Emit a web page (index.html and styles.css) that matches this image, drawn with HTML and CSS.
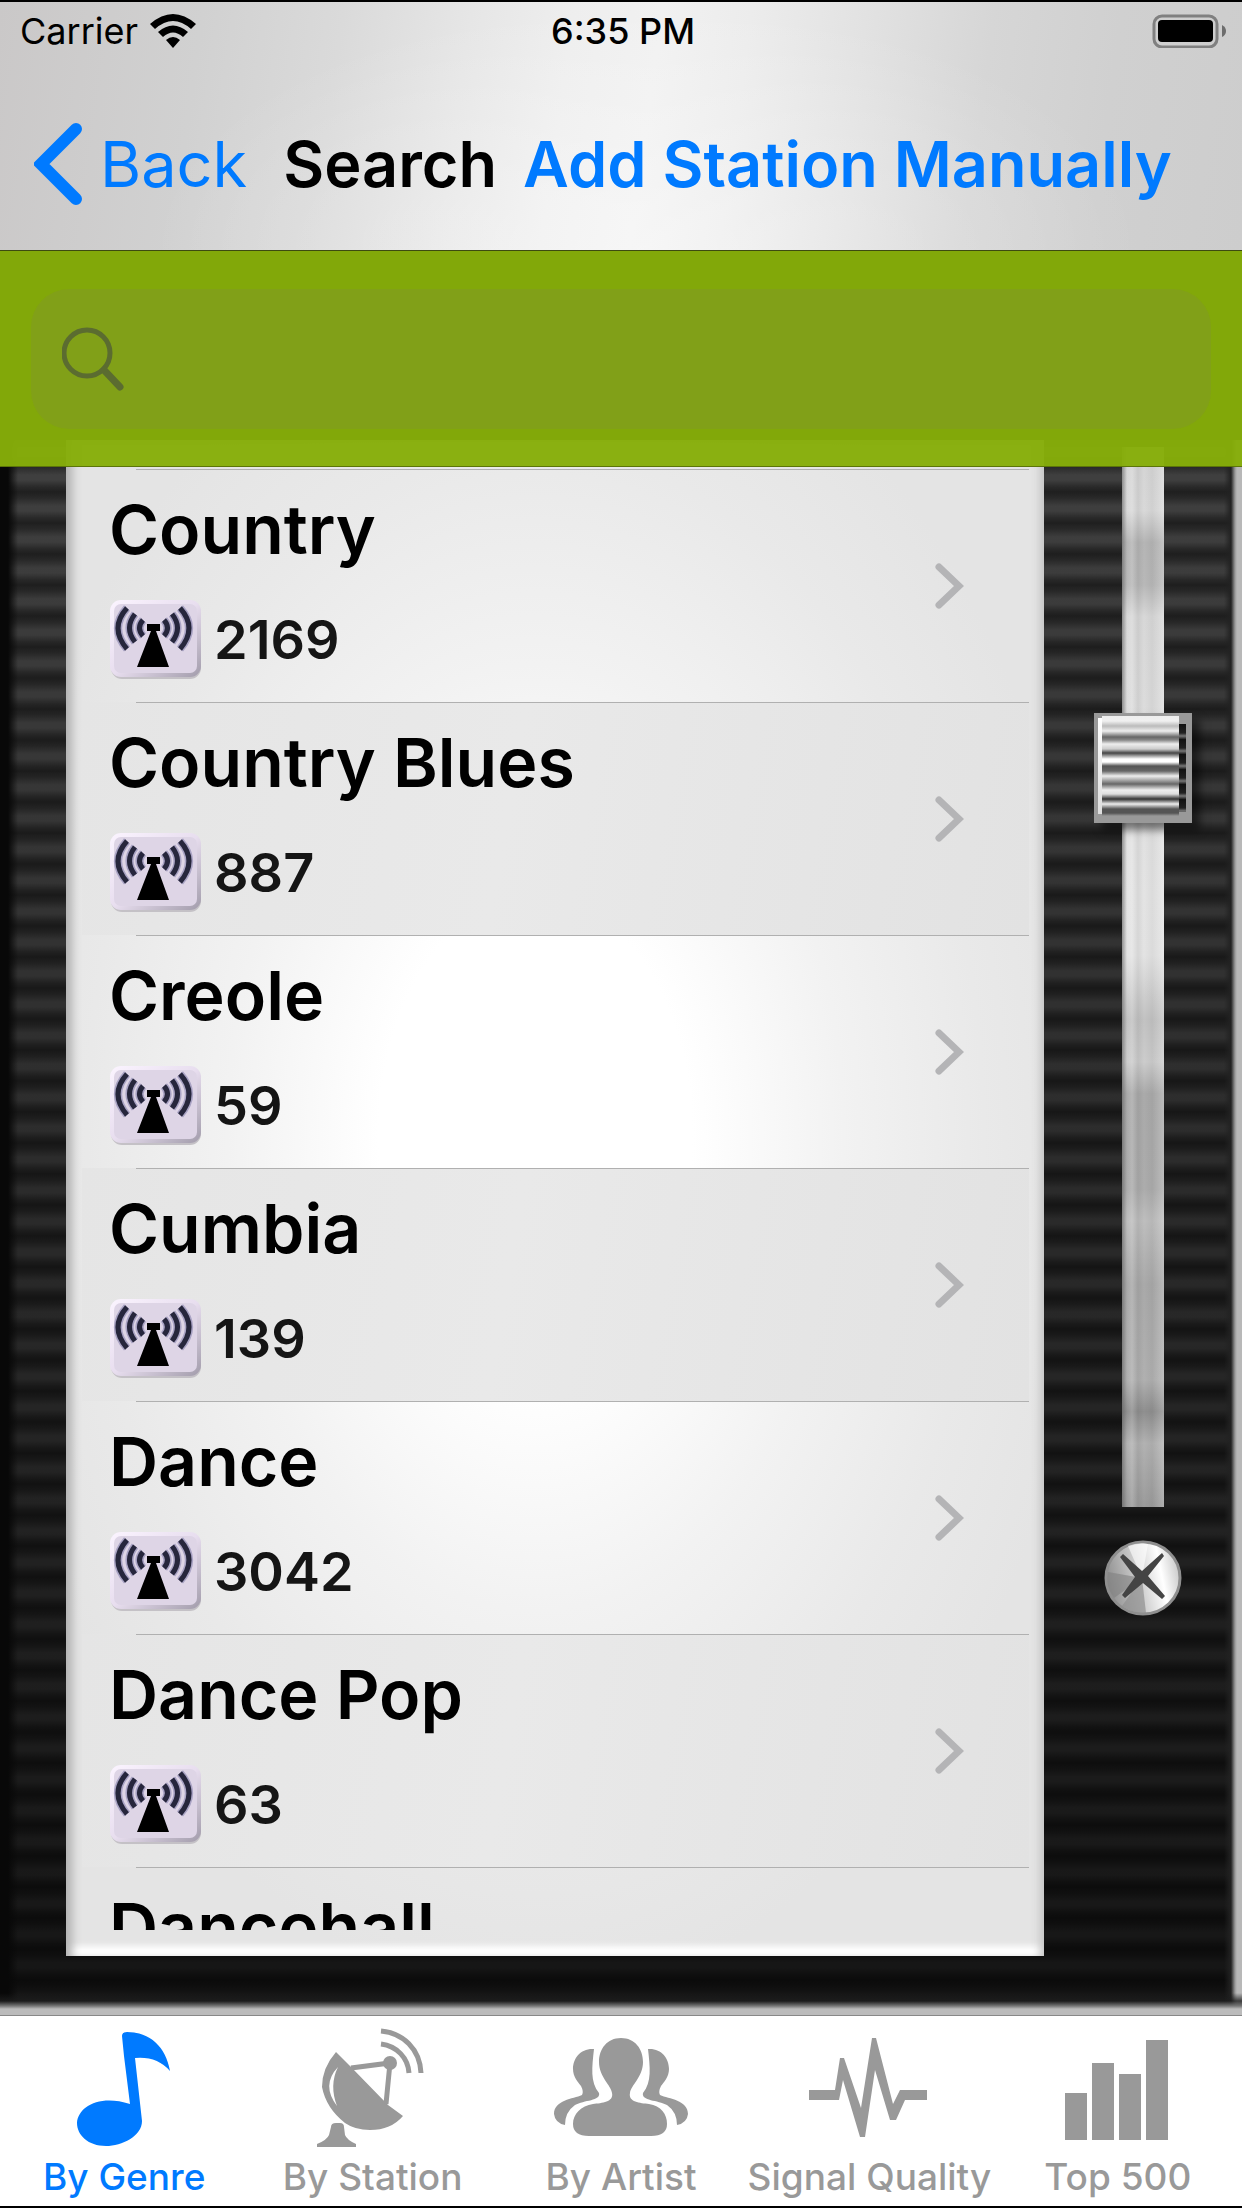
FILE: index.html
```html
<!DOCTYPE html>
<html lang="en">
<head>
    <meta charset="UTF-8">
    <meta name="viewport" content="width=device-width, initial-scale=1.0">
    <title>Search</title>
    <link rel="stylesheet" href="styles.css">
</head>
<body>
<!-- shared icons -->
<svg class="sprite" width="0" height="0" aria-hidden="true">
    <defs>
        <linearGradient id="badge-edge" x1="0" y1="0" x2="1" y2="1">
            <stop offset="0" stop-color="#fbf4ff"/>
            <stop offset="0.5" stop-color="#e8deef"/>
            <stop offset="1" stop-color="#a29cab"/>
        </linearGradient>
        <symbol id="antenna" viewBox="0 0 93 81">
            <rect x="2" y="4" width="90" height="76" rx="11" fill="#c4c1c6"/>
            <rect x="1" y="1" width="91" height="77" rx="11" fill="url(#badge-edge)"/>
            <rect x="5" y="5" width="83" height="69" rx="7" fill="#ded5e6"/>
            <g fill="none" stroke="#a9a3c4" stroke-width="8">
                <path d="M18 9Q0 29 18 50M26 15Q15 29 26 43M34 21Q27 29 34 37"/>
                <path d="M71 9Q89 29 71 50M63 15Q74 29 63 43M55 21Q62 29 55 37"/>
            </g>
            <g fill="none" stroke="#26263c" stroke-width="5">
                <path d="M18 9Q0 29 18 50M26 15Q15 29 26 43M34 21Q27 29 34 37"/>
                <path d="M71 9Q89 29 71 50M63 15Q74 29 63 43M55 21Q62 29 55 37"/>
            </g>
            <path d="M38 25h13v7h-4L60 68H28L42 32h-4z"/>
        </symbol>
        <symbol id="chevron" viewBox="0 0 30 48">
            <path d="M5 5L25 24L5 43" fill="none" stroke="#b4b4b6" stroke-width="7" stroke-linecap="round"/>
        </symbol>
    </defs>
</svg>

<header class="header">
    <div class="status-bar">
        <div class="carrier">
            <span>Carrier</span>
            <svg class="wifi" viewBox="0 0 46 34" aria-hidden="true">
                <path d="M0 10Q23-10 46 10L41 15Q23-1 5 15zM8 18Q23 5 38 18L33 23Q23 14 13 23zM16 26Q23 20 30 26L23 34z"/>
            </svg>
        </div>
        <span class="clock">6:35 PM</span>
        <svg class="battery" viewBox="0 0 74 34" aria-hidden="true">
            <rect x="2" y="2" width="63" height="31" rx="8" fill="none" stroke="#808080" stroke-width="3"/>
            <rect x="6" y="6" width="55" height="22" rx="4"/>
            <path d="M70 11Q74 13 74 17T70 23z" fill="#6d6d6d"/>
        </svg>
    </div>
    <nav class="nav-bar">
        <a class="back" href="#">
            <svg class="back-arrow" viewBox="0 0 50 82" aria-hidden="true">
                <path d="M42 6L7 41L42 76" fill="none" stroke="#007aff" stroke-width="12" stroke-linecap="round"/>
            </svg>
            Back
        </a>
        <h1 class="title">Search</h1>
        <a class="add-station" href="#">Add Station Manually</a>
    </nav>
</header>

<form class="search-bar">
    <label class="search-field">
        <svg class="search-icon" viewBox="0 0 62 64" aria-hidden="true">
            <circle cx="25" cy="26" r="23" fill="none" stroke="#5b6c30" stroke-width="5"/>
            <path d="M42 43L58 60" stroke="#5b6c30" stroke-width="7" stroke-linecap="round"/>
        </svg>
        <input class="search-input" type="search" aria-label="Search">
    </label>
</form>

<main class="radio">
    <section class="card">
        <ul class="genre-list">
            <li><a class="genre" href="#">
                <span class="genre-name">Country</span>
                <span class="genre-count"><svg class="badge"><use href="#antenna"/></svg>2169</span>
                <svg class="chevron"><use href="#chevron"/></svg>
            </a></li>
            <li><a class="genre" href="#">
                <span class="genre-name">Country Blues</span>
                <span class="genre-count"><svg class="badge"><use href="#antenna"/></svg>887</span>
                <svg class="chevron"><use href="#chevron"/></svg>
            </a></li>
            <li><a class="genre" href="#">
                <span class="genre-name">Creole</span>
                <span class="genre-count"><svg class="badge"><use href="#antenna"/></svg>59</span>
                <svg class="chevron"><use href="#chevron"/></svg>
            </a></li>
            <li><a class="genre" href="#">
                <span class="genre-name">Cumbia</span>
                <span class="genre-count"><svg class="badge"><use href="#antenna"/></svg>139</span>
                <svg class="chevron"><use href="#chevron"/></svg>
            </a></li>
            <li><a class="genre" href="#">
                <span class="genre-name">Dance</span>
                <span class="genre-count"><svg class="badge"><use href="#antenna"/></svg>3042</span>
                <svg class="chevron"><use href="#chevron"/></svg>
            </a></li>
            <li><a class="genre" href="#">
                <span class="genre-name">Dance Pop</span>
                <span class="genre-count"><svg class="badge"><use href="#antenna"/></svg>63</span>
                <svg class="chevron"><use href="#chevron"/></svg>
            </a></li>
            <li><a class="genre" href="#">
                <span class="genre-name">Dancehall</span>
            </a></li>
        </ul>
    </section>
    <aside class="tuner">
        <input class="slider" type="range" min="0" max="100" value="28" aria-label="Scroll position">
        <svg class="screw" viewBox="0 0 78 76" aria-hidden="true">
            <defs>
                <linearGradient id="screw-face" x1="0" y1="0.6" x2="1" y2="0.4">
                    <stop offset="0" stop-color="#8c8c8c"/>
                    <stop offset="0.45" stop-color="#cfcfcf"/>
                    <stop offset="0.75" stop-color="#fff"/>
                    <stop offset="1" stop-color="#c8c8c8"/>
                </linearGradient>
            </defs>
            <ellipse cx="39" cy="38" rx="37" ry="36" fill="url(#screw-face)" stroke="#8f8f8f" stroke-width="3"/>
            <path d="M38 38L4 32Q1 46 10 58z" fill="#808080" opacity="0.6"/>
            <path d="M38 38L18 66Q30 74 42 73z" fill="#909090" opacity="0.7"/>
            <path d="M38 38L24 6Q34 2 44 4z" fill="#fff" opacity="0.6"/>
            <path d="M19 14L38 31L58 13L60 16L44 36L61 56L58 59L39 43L21 58L18 55L31 37L16 17z" fill="#444"/>
        </svg>
    </aside>
</main>

<nav class="tab-bar">
    <a class="tab active" href="#">
        <svg class="tab-icon" viewBox="-8 0 136 126" aria-hidden="true">
            <path d="M58 12Q58 8 63 8C86 8 102 23 106 47Q93 32 71 34L78 97C78 112 58 122 42 122C24 122 13 111 13 99C14 83 35 70 66 80L60 32z"/>
        </svg>
        <span>By Genre</span>
    </a>
    <a class="tab" href="#">
        <svg class="tab-icon" viewBox="-8 0 136 126" aria-hidden="true">
            <path d="M23 28L39 44L75 81L90 92Q78 106 57 106Q42 106 32 99Q13 84 9 63Q9 44 23 28zM25 43Q8 61 24 82Q16 61 25 43z" fill-rule="evenodd"/>
            <path d="M38 44L77 39L73 80M68 7C90 9 107 25 108 49M68 20C84 22 95 34 96 49" fill="none" stroke="#999" stroke-width="5"/>
            <circle cx="77" cy="39" r="7"/>
            <path d="M18 103Q18 99 23 99H27Q31 99 31 103L32 111Q34 116 43 120V123H4V120Q14 116 16 111z"/>
        </svg>
        <span>By Station</span>
    </a>
    <a class="tab" href="#">
        <svg class="tab-icon" viewBox="-8 0 136 126" aria-hidden="true">
            <path id="person" d="M33 25C20 24 12 34 12 45C12 53 17 58 20 62Q23 68 21 71C12 75-7 76-7 90Q-6 99 4 101Q4 88 14 81C23 76 40 77 38 69C29 58 31 43 33 25z"/>
            <use href="#person" transform="matrix(-1 0 0 1 120 0)"/>
            <path d="M60 14C74 14 82 25 82 38C82 53 70 61 69 69C67 78 79 79 88 80C100 82 106 90 106 100Q106 112 90 112H28Q12 112 12 100C12 90 20 82 32 80C41 79 53 78 51 69C50 61 38 53 38 38C38 25 46 14 60 14z"/>
        </svg>
        <span>By Artist</span>
    </a>
    <a class="tab" href="#">
        <svg class="tab-icon" viewBox="-8 0 136 126" aria-hidden="true">
            <path d="M0 66H26L31 34H35L52 84L63 14H67L84 80L91 66H118V76H96L87 96H81L66 46L56 113H51L34 56L30 76H0z"/>
        </svg>
        <span>Signal Quality</span>
    </a>
    <a class="tab" href="#">
        <svg class="tab-icon" viewBox="-8 0 136 126" aria-hidden="true">
            <path d="M7 69h22v47H7zM34 39h22v77H34zM61 50h22v66H61zM88 16h22v100H88z"/>
        </svg>
        <span>Top 500</span>
    </a>
</nav>
</body>
</html>
```
FILE: styles.css
```css
* {
    margin: 0;
    padding: 0;
    box-sizing: border-box;
}

body {
    font-family: Inter, 'Liberation Sans', sans-serif;
    height: 100vh;
    display: flex;
    flex-direction: column;
    background: #111;
    border-top: 2px solid #000;
    border-bottom: 2px solid #000;
    color: #000;
    overflow: hidden;
}

a {
    color: inherit;
    text-decoration: none;
}

.sprite {
    position: absolute;
}

/* header */
.header {
    height: 249px;
    flex-shrink: 0;
    background:
        radial-gradient(ellipse 40% 100% at 52% 100%, rgba(255, 255, 255, 0.4), transparent),
        linear-gradient(98deg, #cac8c8, #d1d1d1 16%, #dadada 27%, #e6e6e6 37%, #eeeeee 45%, #f1f1f1 52%, #ececec 59%, #e2e2e2 68%, #d6d6d6 78%, #d0d0d0 88%, #cdcdcd);
    border-bottom: 1px solid #3d4a10;
}

.status-bar {
    display: grid;
    grid-template-columns: 1fr auto 1fr;
    align-items: center;
    height: 58px;
    padding: 0 16px 0 20px;
    font-size: 36px;
}

.carrier {
    display: flex;
    align-items: center;
    gap: 12px;
}

.wifi {
    width: 46px;
    height: 34px;
}

.clock {
    font-weight: 500;
}

.battery {
    width: 74px;
    height: 34px;
    justify-self: end;
}

.nav-bar {
    display: flex;
    align-items: center;
    height: 212px;
    margin-top: -2px;
    padding: 0 34px;
    font-size: 63px;
    white-space: nowrap;
}

.back {
    display: flex;
    align-items: center;
    gap: 16px;
    color: #007aff;
}

.back-arrow {
    width: 50px;
    height: 82px;
}

.title {
    margin-left: 36px;
    font-size: 63px;
    font-weight: 600;
}

.add-station {
    margin-left: 26px;
    color: #007aff;
    font-weight: 600;
}

/* search */
.search-bar {
    position: relative;
    z-index: 1;
    flex-shrink: 0;
    height: 216px;
    padding: 38px 31px;
    background: rgba(134, 173, 9, 0.97);
    border-bottom: 1px solid #5c7508;
}

.search-field {
    display: flex;
    align-items: center;
    gap: 20px;
    height: 140px;
    padding: 0 31px;
    border-radius: 38px;
    background: rgba(130, 142, 60, 0.3);
}

.search-icon {
    width: 62px;
    height: 64px;
}

.search-input {
    flex: 1;
    height: 100%;
    border: none;
    outline: none;
    background: transparent;
    font: inherit;
    font-size: 63px;
}

/* list and tuner, slightly under the search bar */
.radio {
    flex: 1;
    min-height: 0;
    display: flex;
    margin-top: -27px;
    padding: 0 0 59px 66px;
    background:
        linear-gradient(to top, #bbb 6px, #777 9px, rgba(30, 30, 30, 0.8) 14px, transparent 22px),
        linear-gradient(to left, #b8b8b8 5px, #999 7px, #222 11px, transparent 18px),
        linear-gradient(to right, #080808 8px, transparent 18px),
        linear-gradient(rgba(0, 0, 0, 0), rgba(0, 0, 0, 0.35) 50%, rgba(0, 0, 0, 0.68)),
        repeating-linear-gradient(#202020 0, #2a2a2a 6px, #404040 14px, #404040 19px, #2a2a2a 26px, #202020 31px);
    background-position: 0 0, 0 0, 0 0, 0 0, 0 21px;
}

.card {
    flex: 1;
    min-width: 0;
    display: flex;
    flex-direction: column;
    padding: 29px 15px 26px 16px;
    background: radial-gradient(ellipse 560px 860px at 48% 46%, #fff 28%, #f2f2f2 55%, #e9e9e9 80%, #e4e4e4 100%);
    box-shadow: inset 12px 0 10px -6px #b0b0b0, inset -8px 0 8px -4px #c4c4c4, inset 0 -12px 6px -2px #fff;
}

.genre-list {
    flex: 1;
    min-height: 0;
    overflow: hidden;
    list-style: none;
}

.genre-list li:nth-child(even) {
    background: linear-gradient(100deg, #e5e5e5, #e9e9e9 45%, #e2e2e2);
}

.genre {
    display: grid;
    grid-template-columns: 1fr auto;
    grid-template-rows: 120px 101px 13px;
    align-items: center;
    height: 233px;
    padding: 0 65px 0 27px;
    background: linear-gradient(#b0b0b0, #b0b0b0) 54px 0 / 100% 1px no-repeat;
}

.genre-name {
    font-size: 68px;
    font-weight: 600;
    white-space: nowrap;
}

.genre-count {
    grid-row: 2;
    display: flex;
    align-items: center;
    gap: 12px;
    color: #151515;
    font-size: 54px;
    font-weight: 600;
}

.badge {
    width: 93px;
    height: 81px;
}

.chevron {
    grid-row: 1 / 4;
    grid-column: 2;
    width: 30px;
    height: 48px;
}

.tuner {
    width: 198px;
    display: flex;
    flex-direction: column;
    align-items: center;
    gap: 33px;
    padding: 7px 0 0;
}

.slider {
    appearance: none;
    writing-mode: vertical-lr;
    width: 98px;
    height: 1060px;
    background:
        linear-gradient(to right, rgba(90, 90, 90, 0.6), transparent 5px, rgba(255, 255, 255, 0.15) 10px, rgba(0, 0, 0, 0.06) 16px, transparent 22px, rgba(0, 0, 0, 0.04) 30px, rgba(255, 255, 255, 0.2)) center / 42px 100% no-repeat,
        linear-gradient(#d4d4d4, #d9d9d9 6%, #b5b5b5 9%, #b8b8b8 13%, #d8d8d8 16%, #dcdcdc 24%, #e4e4e4 42%, #e3e3e3 48%, #c2c2c2 54%, #ccc 58%, #aaa 61%, #acacac 70%, #bebebe 73%, #a9a9a9 79%, #b0b0b0 88%, #8f8f8f 91%, #b2b2b2 94%, #9b9b9b) center / 42px 100% no-repeat;
}

.slider::-webkit-slider-thumb {
    appearance: none;
    width: 98px;
    height: 110px;
    border: 3px solid #999;
    background:
        linear-gradient(#fff, #ddd) 1px 2px / 4px 96px no-repeat,
        repeating-linear-gradient(#111 0, #222 9px, #777 12px, #222 15px) 82px 8px / 7px 88px no-repeat,
        linear-gradient(#eee 0, #f0f0f0 5px, #bbb 10px, #eee 15px, #666 21px, #888 24px, #eee 28px, #ccc 33px, #444 37px, #fff 43px, #fff 46px, #555 50px, #666 55px, #eee 60px, #bbb 63px, #666 68px, #eee 74px, #ddd 78px, #333 83px, #eee 88px, #555 93px, #555 97px, #999 100px) 5px 0 / 77px 100% no-repeat,
        #999;
    box-shadow: 8px 7px 8px rgba(0, 0, 0, 0.5);
}

.screw {
    width: 78px;
    height: 76px;
}

/* tabs */
.tab-bar {
    display: grid;
    grid-template-columns: repeat(5, minmax(0, 1fr));
    flex-shrink: 0;
    height: 191px;
    border-top: 1px solid #888;
    background: #fff;
}

.tab {
    display: flex;
    flex-direction: column;
    align-items: center;
    padding-top: 8px;
    color: #999;
    fill: #999;
    font-size: 37px;
    font-weight: 500;
    line-height: 54px;
    white-space: nowrap;
}

.tab.active {
    color: #007aff;
    fill: #007aff;
}

.tab-icon {
    width: 136px;
    height: 126px;
}
```
